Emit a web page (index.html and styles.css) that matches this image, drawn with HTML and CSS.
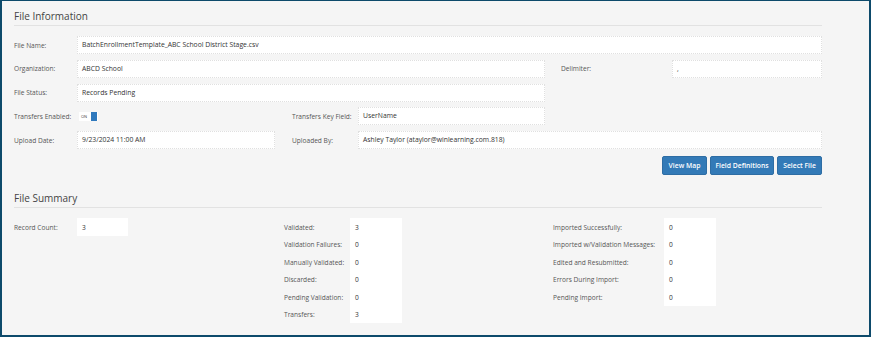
FILE: index.html
```html
<!DOCTYPE html>
<html>
<head>
<meta charset="utf-8">
<link rel="stylesheet" href="styles.css">
</head>
<body>
<div class="frame">
  <h2 class="section-title first">File Information</h2>
  <div class="form">
    <div class="row">
      <span class="lbl w63">File Name:</span>
      <span class="box grow">BatchEnrollmentTemplate_ABC School District Stage.csv</span>
    </div>
    <div class="row">
      <span class="lbl w63">Organization:</span>
      <span class="box w468">ABCD School</span>
      <span class="lbl delim">Delimiter:</span>
      <span class="box grow">,</span>
    </div>
    <div class="row">
      <span class="lbl w63">File Status:</span>
      <span class="box w468">Records Pending</span>
    </div>
    <div class="row">
      <span class="lbl w63">Transfers Enabled:</span>
      <span class="toggle-cell"><span class="toggle"><span class="on">ON</span><span class="knob"></span></span></span>
      <span class="lbl w66">Transfers Key Field:</span>
      <span class="box w187">UserName</span>
    </div>
    <div class="row">
      <span class="lbl w63">Upload Date:</span>
      <span class="box w198">9/23/2024 11:00 AM</span>
      <span class="lbl w66 ml17">Uploaded By:</span>
      <span class="box grow">Ashley Taylor (ataylor@winlearning.com.818)</span>
    </div>
    <div class="actions">
      <button class="btn b-map">View Map</button>
      <button class="btn b-def">Field Definitions</button>
      <button class="btn b-sel">Select File</button>
    </div>
  </div>

  <h2 class="section-title second">File Summary</h2>
  <div class="summary">
    <div class="col c1">
      <span class="slbl">Record Count:</span><span class="sval">3</span>
    </div>
    <div class="col c2">
      <span class="slbl">Validated:</span><span class="sval">3</span>
      <span class="slbl">Validation Failures:</span><span class="sval">0</span>
      <span class="slbl">Manually Validated:</span><span class="sval">0</span>
      <span class="slbl">Discarded:</span><span class="sval">0</span>
      <span class="slbl">Pending Validation:</span><span class="sval">0</span>
      <span class="slbl">Transfers:</span><span class="sval">3</span>
    </div>
    <div class="col c3">
      <span class="slbl">Imported Successfully:</span><span class="sval">0</span>
      <span class="slbl">Imported w/Validation Messages:</span><span class="sval">0</span>
      <span class="slbl">Edited and Resubmitted:</span><span class="sval">0</span>
      <span class="slbl">Errors During Import:</span><span class="sval">0</span>
      <span class="slbl">Pending Import:</span><span class="sval">0</span>
    </div>
  </div>
</div>
</body>
</html>
```

FILE: styles.css
```css
* { box-sizing: border-box; }
html, body { margin: 0; padding: 0; }
body {
  font-family: "Open Sans", "Noto Sans", sans-serif;
  font-size: 6.6px;
  color: #333;
}
.frame {
  width: 871px;
  height: 337px;
  background: #f5f5f5;
  border: 2px solid #0d4a6b;
  border-top-width: 1px;
  padding: 0 47px 0 12px;
  overflow: hidden;
}
.section-title {
  margin: 0;
  font-weight: 400;
  font-size: 10px;
  color: #444;
  border-bottom: 1px solid #e2e2e2;
  line-height: 15px;
}
.section-title.first { padding-top: 8px; padding-bottom: 1px; }
.section-title.second { margin-top: 16px; padding-bottom: 1px; }
.form {
  display: flex;
  flex-direction: column;
  gap: 5.75px;
  padding-top: 10px;
}
.row {
  display: flex;
  align-items: center;
  height: 18px;
}
.lbl { color: #555; white-space: nowrap; }
.w63 { width: 63px; flex: none; }
.w66 { width: 66px; flex: none; }
.ml17 { margin-left: 17px; }
.delim { width: 111px; margin-left: 16px; flex: none; }
.box {
  height: 18px;
  line-height: 16px;
  background: #fff;
  border: 1px dotted #e0e0e0;
  padding: 0 4px;
  color: #333;
  font-size: 6.8px;
  white-space: nowrap;
}
.grow { flex: 1; }
.w468 { width: 468px; flex: none; }
.w198 { width: 198px; flex: none; }
.w187 { width: 187px; flex: none; }
.toggle-cell { width: 215px; flex: none; display: flex; align-items: center; padding-left: 2px; }
.toggle {
  display: flex;
  align-items: center;
  background: #fff;
  height: 9px;
  width: 19px;
}
.on { font-size: 4px; color: #444; padding-left: 2px; width: 12px; }
.knob { width: 6px; height: 9px; background: #2f79bd; }
.actions {
  display: flex;
  justify-content: flex-end;
  gap: 3px;
  margin-top: 1.5px;
}
.btn {
  font-family: inherit;
  font-size: 6.8px;
  font-weight: 600;
  color: #fff;
  background: #337ab7;
  border: 1px solid #2e6da4;
  border-radius: 2px;
  height: 19px;
  padding: 0;
}
.b-map { width: 45px; }
.b-def { width: 64px; }
.b-sel { width: 45px; }
.summary {
  display: flex;
  padding-top: 10px;
}
.col {
  display: grid;
  grid-auto-rows: 17.5px;
  align-items: center;
  align-content: start;
}
.c1 { width: 270px; grid-template-columns: 63px 51px; }
.c2 { width: 269px; grid-template-columns: 66px 52px; }
.c3 { grid-template-columns: 111px 52px; }
.slbl { color: #555; white-space: nowrap; }
.sval {
  background: #fff;
  height: 100%;
  display: flex;
  align-items: center;
  padding-left: 5px;
  color: #333;
}
```
